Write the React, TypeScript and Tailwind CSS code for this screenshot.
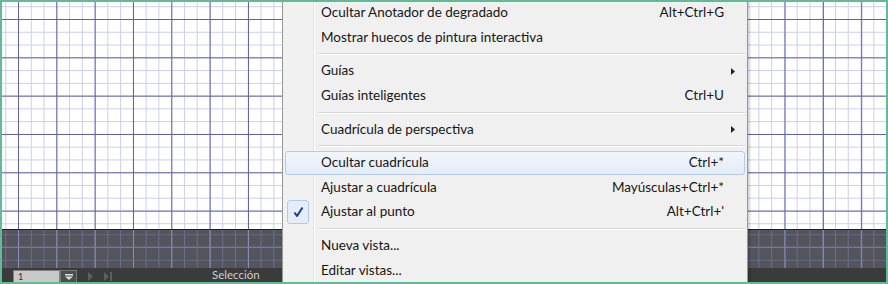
const gridLight =
  "bg-white [background-image:linear-gradient(to_right,#5f5fa3_1px,transparent_1px),linear-gradient(to_bottom,#5f5fa3_1px,transparent_1px),linear-gradient(to_right,#cdcdef_1px,transparent_1px),linear-gradient(to_bottom,#cdcdef_1px,transparent_1px)] [background-size:38.33px_38.33px,38.33px_38.33px,12.777px_12.777px,12.777px_12.777px] [background-position:16px_17px,16px_17px,16px_17px,16px_17px]";

const gridDark =
  "bg-[#54545c] [background-image:linear-gradient(to_right,#8c8cb4_1px,transparent_1px),linear-gradient(to_bottom,#7c7ca4_1px,transparent_1px),linear-gradient(to_right,#6c6c8e_1px,transparent_1px),linear-gradient(to_bottom,#66667e_1px,transparent_1px)] [background-size:38.33px_38.33px,38.33px_38.33px,12.777px_12.777px,12.777px_12.777px] [background-position:16px_17px,16px_17px,16px_17px,16px_17px]";

type Item =
  | { sep: true }
  | { label: string; shortcut?: string; sub?: boolean; checked?: boolean; hover?: boolean };

const items: Item[] = [
  { label: "Ocultar Anotador de degradado", shortcut: "Alt+Ctrl+G" },
  { label: "Mostrar huecos de pintura interactiva" },
  { sep: true },
  { label: "Guías", sub: true },
  { label: "Guías inteligentes", shortcut: "Ctrl+U" },
  { sep: true },
  { label: "Cuadrícula de perspectiva", sub: true },
  { sep: true },
  { label: "Ocultar cuadrícula", shortcut: "Ctrl+*", hover: true },
  { label: "Ajustar a cuadrícula", shortcut: "Mayúsculas+Ctrl+*" },
  { label: "Ajustar al punto", shortcut: "Alt+Ctrl+'", checked: true },
  { sep: true },
  { label: "Nueva vista..." },
  { label: "Editar vistas..." },
];

function Check() {
  return (
    <div className="ml-[1px] flex h-[24px] w-[22px] items-center justify-center rounded-[3px] border border-[#aecbe9] bg-[#e4edf8]">
      <svg width="11" height="12" viewBox="0 0 11 12">
        <path d="M1.5 6.5 L4 10 L9.5 1.5" fill="none" stroke="#1d3b8f" strokeWidth="2" strokeLinejoin="round" />
      </svg>
    </div>
  );
}

function Menu() {
  return (
    <div className="absolute left-[280px] top-[-1.3px] w-[466px] border-x border-[#979797] bg-[#f0f0f0] bg-[linear-gradient(to_right,#f1f1f1_30px,#e2e3e3_30px,#e2e3e3_31px,#ffffff_31px,#ffffff_32px,#f0f0f0_32px)] pb-4 shadow-[2px_0_2px_rgba(0,0,0,0.18)] font-['Lato',sans-serif] text-[13.5px] text-[#161616]">
      {items.map((it, i) =>
        "sep" in it ? (
          <div key={i} className="flex h-[9px] flex-col justify-center pl-[36px] pr-[2px]">
            <div className="h-px bg-[#d7d7d7]" />
            <div className="h-px bg-white" />
          </div>
        ) : (
          <div
            key={i}
            className={
              "mx-[2px] flex h-[24.6px] items-center rounded-[3px] border " +
              (it.hover
                ? "border-[#b3cde9] bg-[linear-gradient(to_bottom,#f3f7fc,#e3ecf7)]"
                : "border-transparent")
            }
          >
            <div className="flex w-[35px] items-center">{it.checked && <Check />}</div>
            <div className="flex-1 leading-none">{it.label}</div>
            <div className="leading-none">{it.shortcut}</div>
            <div className="flex w-[20px] justify-start pl-[7px]">
              {it.sub && (
                <svg width="4" height="7" viewBox="0 0 4 7">
                  <path d="M0 0 L4 3.5 L0 7 Z" fill="#222" />
                </svg>
              )}
            </div>
          </div>
        )
      )}
    </div>
  );
}

export default function App() {
  return (
    <div className="h-[284px] w-[888px] bg-[#63ba97] p-[2px]">
      <div className="relative flex h-full flex-col overflow-hidden">
        <div className={"h-[227px] " + gridLight} />
        <div className={"h-[39px] border-t border-[#1e1e22] " + gridDark} />
        <div className="flex h-[14px] items-start bg-[#3b3b3b] font-['Lato',sans-serif] text-[12px]">
          <div className="ml-[11px] mt-[2px] flex h-[14px] w-[47px] items-start border border-[#808080] bg-[#c9c9c9] pl-[4px] text-[9px] leading-[12px] text-[#333]">
            1
          </div>
          <div className="mt-[2px] flex h-[14px] w-[17px] justify-center border border-[#777] bg-[#4d4d4d] pt-[3px]">
            <svg width="8" height="6" viewBox="0 0 8 6">
              <rect x="0" y="0" width="8" height="1.5" fill="#ddd" />
              <path d="M0 2.5 L8 2.5 L4 6 Z" fill="#ddd" />
            </svg>
          </div>
          <div className="ml-[11px] mt-[4px] flex gap-[11px]">
            <svg width="5" height="9" viewBox="0 0 5 9">
              <path d="M0 0 L5 4.5 L0 9 Z" fill="#5e5e5e" />
            </svg>
            <svg width="8" height="9" viewBox="0 0 8 9">
              <path d="M0 0 L5 4.5 L0 9 Z" fill="#5e5e5e" />
              <rect x="6" y="0" width="2" height="9" fill="#5e5e5e" />
            </svg>
          </div>
          <div className="ml-[100px] mt-[1px] text-[11.5px] leading-none text-[#cfcfcf]">Selección</div>
        </div>
        <Menu />
      </div>
    </div>
  );
}
